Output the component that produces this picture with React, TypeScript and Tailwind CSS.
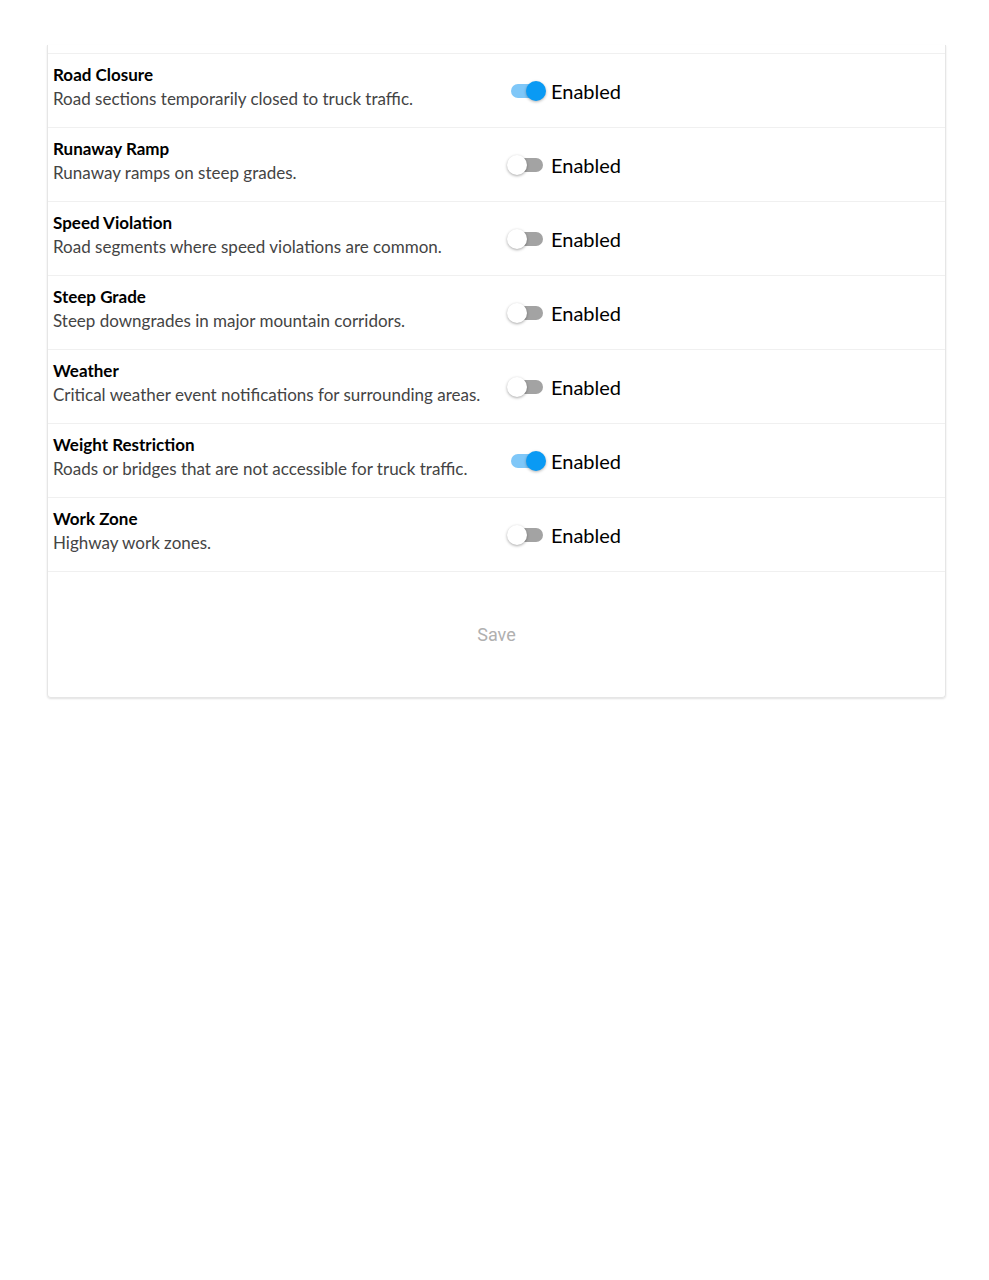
const ROWS = [
  { title: "Road Closure", desc: "Road sections temporarily closed to truck traffic.", on: true },
  { title: "Runaway Ramp", desc: "Runaway ramps on steep grades.", on: false },
  { title: "Speed Violation", desc: "Road segments where speed violations are common.", on: false },
  { title: "Steep Grade", desc: "Steep downgrades in major mountain corridors.", on: false },
  { title: "Weather", desc: "Critical weather event notifications for surrounding areas.", on: false },
  { title: "Weight Restriction", desc: "Roads or bridges that are not accessible for truck traffic.", on: true },
  { title: "Work Zone", desc: "Highway work zones.", on: false },
];

function Toggle({ on }: { on: boolean }) {
  return (
    <span className="relative inline-block w-[44px] h-[20px] shrink-0">
      <span
        className={
          on
            ? "absolute left-[4px] top-[3px] w-[34px] h-[14px] rounded-full bg-[#7fc7f8]"
            : "absolute left-[4px] top-[3px] w-[32px] h-[14px] rounded-full bg-[#a3a3a3]"
        }
      />
      <span
        className={
          on
            ? "absolute left-[19px] top-0 w-[20px] h-[20px] rounded-full bg-[#0a9af4] shadow-[0_1px_3px_rgba(0,0,0,0.3)]"
            : "absolute left-0 top-0 w-[20px] h-[20px] rounded-full bg-white shadow-[0_1px_3px_rgba(0,0,0,0.35)]"
        }
      />
    </span>
  );
}

export default function App() {
  return (
    <div className="min-h-[1280px] bg-white pt-[45px] px-[47px] font-['Lato','Noto_Sans',sans-serif]">
      <div className="w-[899px] border-x border-b border-[#e6e6e6] rounded-b-[4px] shadow-[0_1px_2px_rgba(0,0,0,0.12)]">
        <div className="h-[9px] border-b border-[#f0f0f0]" />
        {ROWS.map((r) => (
          <div key={r.title} className="flex items-center h-[74px] border-b border-[#f0f0f0] pl-[5px]">
            <div className="w-[454px] flex flex-col pb-[8px]">
              <span className="text-[17px] leading-[24px] font-bold text-black">{r.title}</span>
              <span className="text-[17px] leading-[24px] text-[#444]">{r.desc}</span>
            </div>
            <div className="flex items-center">
              <Toggle on={r.on} />
              <span className="text-[20px] leading-[24px] text-black">Enabled</span>
            </div>
          </div>
        ))}
        <div className="h-[125px] flex items-center justify-center">
          <span className="text-[18px] text-[#b0b0b0] font-['Roboto',sans-serif]">Save</span>
        </div>
      </div>
    </div>
  );
}
